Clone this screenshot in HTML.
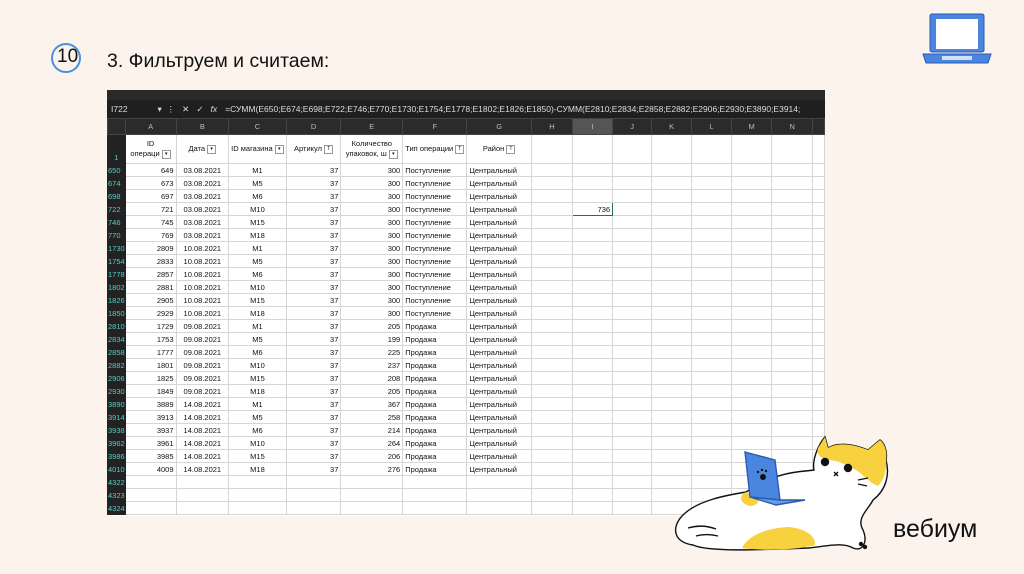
<!DOCTYPE html>
<html><head><meta charset="utf-8"><style>
body{margin:0;width:1024px;height:574px;background:#fcf4ec;position:relative;overflow:hidden;font-family:"Liberation Sans",sans-serif}
.title{position:absolute;left:107px;top:50px;font-size:19.5px;color:#111}
.sheet{position:absolute;left:107px;top:90px;width:718px;height:426px;background:#fff;overflow:hidden}
.top{position:absolute;left:0;top:0;width:718px;height:10px;background:#2a2a2a}
.fb{position:absolute;left:0;top:10px;width:718px;height:18px;background:#1f1f1f;color:#ddd;font-size:8.5px;line-height:18px}
table{position:absolute;left:0;top:28px;border-collapse:collapse;table-layout:fixed;font-family:"Liberation Sans",sans-serif;font-size:7.5px;color:#111}
td{border:1px solid #d6d6d6;height:12px;padding:0 2px;white-space:nowrap;overflow:hidden}
tr.ch td{background:#2b2b2b;color:#bbb;text-align:center;height:15px;border-color:#444}
td.rh{background:#222;color:#5cc;border-color:#222;padding:0;text-align:left;font-size:7.5px}
tr.h1 td{height:28px;text-align:center;font-size:7.5px;line-height:10px}
.r{text-align:right}.c{text-align:center}
.fl{display:inline-block;width:7px;height:7px;border:1px solid #999;font-size:5px;line-height:7px;vertical-align:bottom}
</style></head><body>
<svg style="position:absolute;left:50px;top:42px" width="34" height="34"><circle cx="16" cy="16" r="14" fill="none" stroke="#4a8fe0" stroke-width="2"/></svg>
<div style="position:absolute;left:57px;top:46px;font-size:19px;color:#111">10</div>
<div class="title">3. Фильтруем и считаем:</div>
<svg style="position:absolute;left:920px;top:12px" width="74" height="54"><rect x="10" y="2" width="54" height="38" rx="2" fill="#4a86e0" stroke="#2a5ab0"/><rect x="16" y="7" width="42" height="30" fill="#fff"/><path d="M3 42 H71 L68 51 H6 Z" fill="#4a86e0" stroke="#2a5ab0"/><rect x="22" y="44" width="30" height="4" fill="#cfe0f8"/></svg>
<div class="sheet">
<div class="top"></div>
<div class="fb"><span style="margin-left:4px">I722</span><span style="margin-left:30px">▾ &nbsp;⋮ &nbsp; ✕ &nbsp; ✓ &nbsp; <i>fx</i></span><span style="margin-left:8px">=СУММ(E650;E674;E698;E722;E746;E770;E1730;E1754;E1778;E1802;E1826;E1850)-СУММ(E2810;E2834;E2858;E2882;E2906;E2930;E3890;E3914;</span></div>
<table>
<colgroup><col style="width:17px"><col style="width:51px"><col style="width:53px"><col style="width:55px"><col style="width:55px"><col style="width:62px"><col style="width:63px"><col style="width:65px"><col style="width:42px"><col style="width:41px"><col style="width:40px"><col style="width:41px"><col style="width:41px"><col style="width:41px"><col style="width:42px"><col style="width:12px"></colgroup>
<tr class="ch"><td></td><td>A</td><td>B</td><td>C</td><td>D</td><td>E</td><td>F</td><td>G</td><td>H</td><td style="background:#555">I</td><td>J</td><td>K</td><td>L</td><td>M</td><td>N</td><td></td></tr>
<tr class="h1"><td class="rh" style="vertical-align:bottom">1</td><td>ID<br>операци <span class="fl">▾</span></td><td>Дата <span class="fl">▾</span></td><td>ID магазина <span class="fl">▾</span></td><td>Артикул <span class="fl">T</span></td><td>Количество<br>упаковок, ш <span class="fl">▾</span></td><td>Тип операции <span class="fl">T</span></td><td>Район <span class="fl">T</span></td><td></td><td></td><td></td><td></td><td></td><td></td><td></td><td></td></tr>
<tr><td class="rh">650</td><td class="r">649</td><td class="c">03.08.2021</td><td class="c">M1</td><td class="r">37</td><td class="r">300</td><td>Поступление</td><td>Центральный</td><td></td><td></td><td></td><td></td><td></td><td></td><td></td><td></td></tr>
<tr><td class="rh">674</td><td class="r">673</td><td class="c">03.08.2021</td><td class="c">M5</td><td class="r">37</td><td class="r">300</td><td>Поступление</td><td>Центральный</td><td></td><td></td><td></td><td></td><td></td><td></td><td></td><td></td></tr>
<tr><td class="rh">698</td><td class="r">697</td><td class="c">03.08.2021</td><td class="c">M6</td><td class="r">37</td><td class="r">300</td><td>Поступление</td><td>Центральный</td><td></td><td></td><td></td><td></td><td></td><td></td><td></td><td></td></tr>
<tr><td class="rh">722</td><td class="r">721</td><td class="c">03.08.2021</td><td class="c">M10</td><td class="r">37</td><td class="r">300</td><td>Поступление</td><td>Центральный</td><td></td><td class="r" style="border:1.5px solid #217346">736</td><td></td><td></td><td></td><td></td><td></td><td></td></tr>
<tr><td class="rh">746</td><td class="r">745</td><td class="c">03.08.2021</td><td class="c">M15</td><td class="r">37</td><td class="r">300</td><td>Поступление</td><td>Центральный</td><td></td><td></td><td></td><td></td><td></td><td></td><td></td><td></td></tr>
<tr><td class="rh">770</td><td class="r">769</td><td class="c">03.08.2021</td><td class="c">M18</td><td class="r">37</td><td class="r">300</td><td>Поступление</td><td>Центральный</td><td></td><td></td><td></td><td></td><td></td><td></td><td></td><td></td></tr>
<tr><td class="rh">1730</td><td class="r">2809</td><td class="c">10.08.2021</td><td class="c">M1</td><td class="r">37</td><td class="r">300</td><td>Поступление</td><td>Центральный</td><td></td><td></td><td></td><td></td><td></td><td></td><td></td><td></td></tr>
<tr><td class="rh">1754</td><td class="r">2833</td><td class="c">10.08.2021</td><td class="c">M5</td><td class="r">37</td><td class="r">300</td><td>Поступление</td><td>Центральный</td><td></td><td></td><td></td><td></td><td></td><td></td><td></td><td></td></tr>
<tr><td class="rh">1778</td><td class="r">2857</td><td class="c">10.08.2021</td><td class="c">M6</td><td class="r">37</td><td class="r">300</td><td>Поступление</td><td>Центральный</td><td></td><td></td><td></td><td></td><td></td><td></td><td></td><td></td></tr>
<tr><td class="rh">1802</td><td class="r">2881</td><td class="c">10.08.2021</td><td class="c">M10</td><td class="r">37</td><td class="r">300</td><td>Поступление</td><td>Центральный</td><td></td><td></td><td></td><td></td><td></td><td></td><td></td><td></td></tr>
<tr><td class="rh">1826</td><td class="r">2905</td><td class="c">10.08.2021</td><td class="c">M15</td><td class="r">37</td><td class="r">300</td><td>Поступление</td><td>Центральный</td><td></td><td></td><td></td><td></td><td></td><td></td><td></td><td></td></tr>
<tr><td class="rh">1850</td><td class="r">2929</td><td class="c">10.08.2021</td><td class="c">M18</td><td class="r">37</td><td class="r">300</td><td>Поступление</td><td>Центральный</td><td></td><td></td><td></td><td></td><td></td><td></td><td></td><td></td></tr>
<tr><td class="rh">2810</td><td class="r">1729</td><td class="c">09.08.2021</td><td class="c">M1</td><td class="r">37</td><td class="r">205</td><td>Продажа</td><td>Центральный</td><td></td><td></td><td></td><td></td><td></td><td></td><td></td><td></td></tr>
<tr><td class="rh">2834</td><td class="r">1753</td><td class="c">09.08.2021</td><td class="c">M5</td><td class="r">37</td><td class="r">199</td><td>Продажа</td><td>Центральный</td><td></td><td></td><td></td><td></td><td></td><td></td><td></td><td></td></tr>
<tr><td class="rh">2858</td><td class="r">1777</td><td class="c">09.08.2021</td><td class="c">M6</td><td class="r">37</td><td class="r">225</td><td>Продажа</td><td>Центральный</td><td></td><td></td><td></td><td></td><td></td><td></td><td></td><td></td></tr>
<tr><td class="rh">2882</td><td class="r">1801</td><td class="c">09.08.2021</td><td class="c">M10</td><td class="r">37</td><td class="r">237</td><td>Продажа</td><td>Центральный</td><td></td><td></td><td></td><td></td><td></td><td></td><td></td><td></td></tr>
<tr><td class="rh">2906</td><td class="r">1825</td><td class="c">09.08.2021</td><td class="c">M15</td><td class="r">37</td><td class="r">208</td><td>Продажа</td><td>Центральный</td><td></td><td></td><td></td><td></td><td></td><td></td><td></td><td></td></tr>
<tr><td class="rh">2930</td><td class="r">1849</td><td class="c">09.08.2021</td><td class="c">M18</td><td class="r">37</td><td class="r">205</td><td>Продажа</td><td>Центральный</td><td></td><td></td><td></td><td></td><td></td><td></td><td></td><td></td></tr>
<tr><td class="rh">3890</td><td class="r">3889</td><td class="c">14.08.2021</td><td class="c">M1</td><td class="r">37</td><td class="r">367</td><td>Продажа</td><td>Центральный</td><td></td><td></td><td></td><td></td><td></td><td></td><td></td><td></td></tr>
<tr><td class="rh">3914</td><td class="r">3913</td><td class="c">14.08.2021</td><td class="c">M5</td><td class="r">37</td><td class="r">258</td><td>Продажа</td><td>Центральный</td><td></td><td></td><td></td><td></td><td></td><td></td><td></td><td></td></tr>
<tr><td class="rh">3938</td><td class="r">3937</td><td class="c">14.08.2021</td><td class="c">M6</td><td class="r">37</td><td class="r">214</td><td>Продажа</td><td>Центральный</td><td></td><td></td><td></td><td></td><td></td><td></td><td></td><td></td></tr>
<tr><td class="rh">3962</td><td class="r">3961</td><td class="c">14.08.2021</td><td class="c">M10</td><td class="r">37</td><td class="r">264</td><td>Продажа</td><td>Центральный</td><td></td><td></td><td></td><td></td><td></td><td></td><td></td><td></td></tr>
<tr><td class="rh">3986</td><td class="r">3985</td><td class="c">14.08.2021</td><td class="c">M15</td><td class="r">37</td><td class="r">206</td><td>Продажа</td><td>Центральный</td><td></td><td></td><td></td><td></td><td></td><td></td><td></td><td></td></tr>
<tr><td class="rh">4010</td><td class="r">4009</td><td class="c">14.08.2021</td><td class="c">M18</td><td class="r">37</td><td class="r">276</td><td>Продажа</td><td>Центральный</td><td></td><td></td><td></td><td></td><td></td><td></td><td></td><td></td></tr>
<tr><td class="rh">4322</td><td></td><td></td><td></td><td></td><td></td><td></td><td></td><td></td><td></td><td></td><td></td><td></td><td></td><td></td><td></td></tr>
<tr><td class="rh">4323</td><td></td><td></td><td></td><td></td><td></td><td></td><td></td><td></td><td></td><td></td><td></td><td></td><td></td><td></td><td></td></tr>
<tr><td class="rh">4324</td><td></td><td></td><td></td><td></td><td></td><td></td><td></td><td></td><td></td><td></td><td></td><td></td><td></td><td></td><td></td></tr>
</table>
</div>
<svg style="position:absolute;left:668px;top:430px" width="230" height="130" viewBox="0 0 230 130" fill="none" stroke="#111" stroke-width="1.4">
<path d="M78 62 C60 65 30 70 15 85 C3 97 5 112 25 115 C40 122 90 120 140 118 C160 116 175 112 185 118 C195 122 200 112 195 100 C188 88 200 80 205 70 C218 60 222 45 218 30 C220 20 215 12 212 10 L200 20 C185 14 170 12 160 18 L157 7 C150 15 144 30 146 40 C135 42 110 40 78 62 Z" fill="#fff"/>
<path d="M157 7 L160 18 C170 12 185 14 200 20 L212 10 C215 12 220 20 218 30 C219 40 216 50 210 56 C200 52 195 44 188 40 C180 36 170 30 160 30 C152 28 148 24 150 18 Z" fill="#f7d23e" stroke="none"/>
<path d="M74 118 C80 105 100 98 120 97 C135 98 148 105 147 115 C130 120 95 121 74 118 Z" fill="#f7d23e" stroke="none"/>
<path d="M78 62 C70 66 72 74 82 76 C88 76 92 72 90 68" fill="#f7d23e" stroke="none"/>
<circle cx="157" cy="32" r="3.5" fill="#111"/><circle cx="180" cy="38" r="3.5" fill="#111"/>
<path d="M166 42 l4 4 m0 -4 l-4 4 M190 50 l10 -2 M190 54 l9 2"/>
<path d="M77 22 L107 30 L112 70 L82 67 Z" fill="#4a86e0" stroke="#2a5ab0"/>
<path d="M82 67 L112 70 L137 70 L108 75 Z" fill="#6a9ae8" stroke="#2a5ab0"/>
<circle cx="95" cy="47" r="3" fill="#111" stroke="none"/><circle cx="90" cy="42" r="1.2" fill="#111" stroke="none"/><circle cx="94" cy="40" r="1.2" fill="#111" stroke="none"/><circle cx="98" cy="41" r="1.2" fill="#111" stroke="none"/>
<path d="M20 98 C30 95 40 96 48 99 M28 106 C35 104 42 104 50 106"/>
<circle cx="193" cy="114" r="1.5" fill="#111"/><circle cx="197" cy="117" r="1.5" fill="#111"/>
</svg>
<div style="position:absolute;left:893px;top:515px;font-size:25px;color:#111">вебиум</div>
</body></html>
